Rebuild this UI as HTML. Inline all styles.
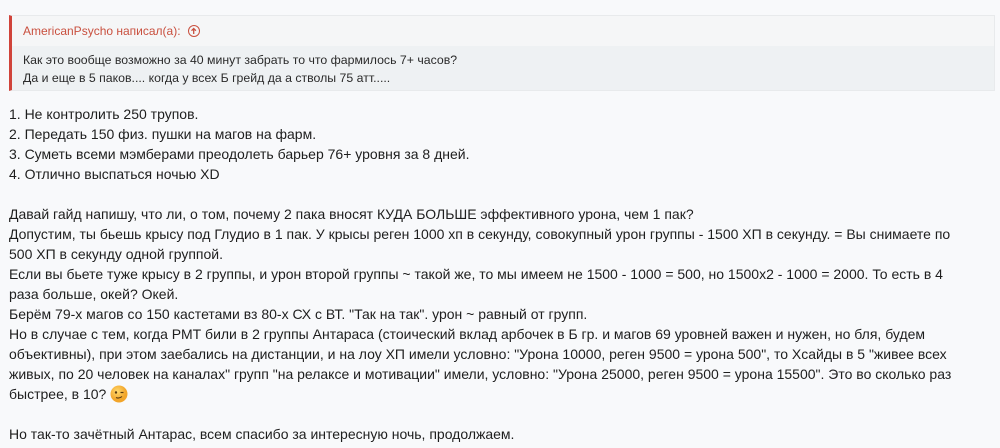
<!DOCTYPE html>
<html><head><meta charset="utf-8"><style>
html,body{margin:0;padding:0;background:#f8f9fb;width:1000px;height:448px;overflow:hidden}
body{font-family:"Liberation Sans","DejaVu Sans",sans-serif;color:#1a1a1a}
.q{position:absolute;left:9px;top:15px;width:986px;height:76px;border:1px solid #e8eaec;border-left:3px solid #d0433a;box-sizing:border-box;background:#eef1f3}
.qh{height:30px;background:#f5f6f7;color:#c9503f;font-size:12px;line-height:30px;padding-left:11px}
.qh span{display:inline-block;width:12px;height:12px;border:1.3px solid #c9503f;border-radius:50%;vertical-align:-2px;margin-left:4px;position:relative;box-sizing:border-box}
.qc{font-size:12.3px;line-height:18px;padding:5px 0 0 11px;color:#2a2a2a}
.m{position:absolute;left:9px;top:104px;font-size:14px;line-height:20px;white-space:nowrap;color:#1e1e1e}
.e{display:inline-block;width:18px;height:18px;vertical-align:-4px}
</style></head><body>
<div class="q">
<div class="qh">AmericanPsycho написал(а): <span><svg width="10" height="10" viewBox="0 0 10 10" style="position:absolute;left:0;top:0"><path d="M4.7 8V2.5M2.5 4.7L4.7 2.5L6.9 4.7" stroke="#c9503f" stroke-width="1.3" fill="none"/></svg></span></div>
<div class="qc">Как это вообще возможно за 40 минут забрать то что фармилось 7+ часов?<br>Да и еще в 5 паков.... когда у всех Б грейд да а стволы 75 атт.....</div>
</div>
<div class="m">1. Не контролить 250 трупов.<br>2. Передать 150 физ. пушки на магов на фарм.<br>3. Суметь всеми мэмберами преодолеть барьер 76+ уровня за 8 дней.<br>4. Отлично выспаться ночью XD<br><br>Давай гайд напишу, что ли, о том, почему 2 пака вносят КУДА БОЛЬШЕ эффективного урона, чем 1 пак?<br>Допустим, ты бьешь крысу под Глудио в 1 пак. У крысы реген 1000 хп в секунду, совокупный урон группы - 1500 ХП в секунду. = Вы снимаете по<br>500 ХП в секунду одной группой.<br>Если вы бьете туже крысу в 2 группы, и урон второй группы ~ такой же, то мы имеем не 1500 - 1000 = 500, но 1500x2 - 1000 = 2000. То есть в 4<br>раза больше, окей? Окей.<br>Берём 79-х магов со 150 кастетами вз 80-х СХ с ВТ. "Так на так". урон ~ равный от групп.<br>Но в случае с тем, когда РМТ били в 2 группы Антараса (стоический вклад арбочек в Б гр. и магов 69 уровней важен и нужен, но бля, будем<br>объективны), при этом заебались на дистанции, и на лоу ХП имели условно: "Урона 10000, реген 9500 = урона 500", то Хсайды в 5 "живее всех<br>живых, по 20 человек на каналах" групп "на релаксе и мотивации" имели, условно: "Урона 25000, реген 9500 = урона 15500". Это во сколько раз<br>быстрее, в 10? <svg class="e" viewBox="0 0 18 18"><defs><radialGradient id="g" cx="40%" cy="35%"><stop offset="0" stop-color="#ffd96e"/><stop offset="1" stop-color="#f2a52a"/></radialGradient></defs><circle cx="9" cy="9" r="8.5" fill="url(#g)"/><circle cx="6" cy="7.5" r="1.2" fill="#5a3a10"/><path d="M10.5 7.5h3" stroke="#5a3a10" stroke-width="1.2"/><path d="M6 12.5q3 1.5 6-1" stroke="#5a3a10" stroke-width="1.1" fill="none"/></svg><br><br>Но так-то зачётный Антарас, всем спасибо за интересную ночь, продолжаем.</div>
</body></html>
